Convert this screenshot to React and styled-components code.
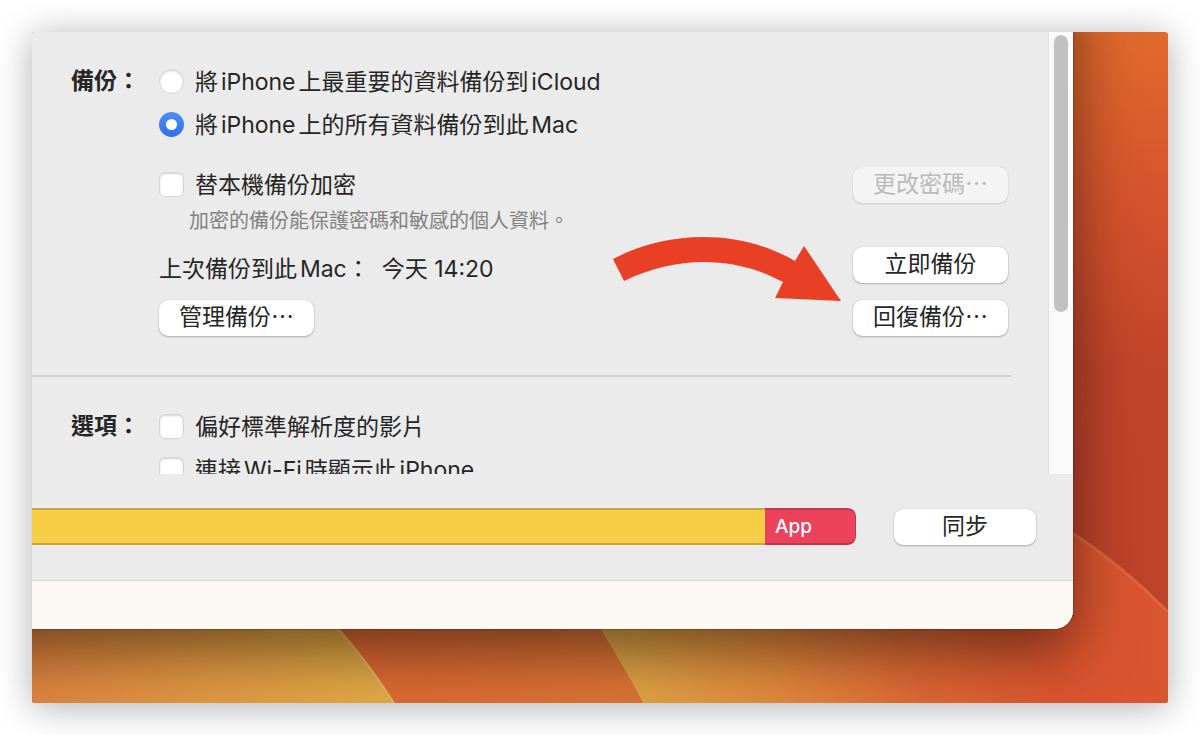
import React, { useState } from "react";
import styled, { createGlobalStyle, css } from "styled-components";

const GlobalStyle = createGlobalStyle`
  * {
    box-sizing: border-box;
  }
  body {
    margin: 0;
    background: #fff;
    color: #262626;
    font-family: Inter, "Noto Sans CJK TC", sans-serif;
    font-size: 23px;
    line-height: 28px;
    text-autospace: normal;
  }
`;

const Page = styled.div`
  display: flex;
  min-height: 100vh;
  padding: 32px;
`;
const Desktop = styled.main`
  position: relative;
  display: flex;
  flex: 1;
  min-width: 0;
  padding: 0 95px 74px 0;
  border-radius: 3px;
  overflow: hidden;
`;
const DesktopShadow = styled.div`
  display: flex;
  flex: 1;
  min-width: 0;
  border-radius: 3px;
  box-shadow: 0 4px 36px rgba(0, 0, 0, 0.32);
`;
const WallpaperSvg = styled.svg`
  position: absolute;
  inset: 0;
  width: 100%;
  height: 100%;
`;
const Window = styled.div`
  position: relative;
  display: flex;
  flex: 1;
  flex-direction: column;
  min-width: 0;
  background: #ebebeb;
  border-radius: 0 0 19px 0;
  overflow: hidden;
`;
/* the shadow runs on past the left and top edges, where the window is cut */
const WindowShadow = styled.div`
  position: relative;
  display: flex;
  flex: 1;
  min-width: 0;
  &:before {
    content: "";
    position: absolute;
    inset: -60px 0 0 -100px;
    border-radius: 0 0 19px 0;
    box-shadow: 0 0 2px rgba(0, 0, 0, 0.5), 0 22px 60px rgba(0, 0, 0, 0.5);
  }
`;

const ScrollArea = styled.div`
  display: flex;
  flex: 1 1 0;
  min-height: 0;
  overflow: hidden;
`;
const Content = styled.div`
  flex: 1;
  min-width: 0;
  padding-right: 37px;
`;
const ScrollTrack = styled.div`
  display: flex;
  justify-content: center;
  width: 25px;
  padding: 3px 0;
  background: #fafafa;
  border-left: 1px solid #e2e2e2;
`;
const ScrollThumb = styled.div`
  width: 14px;
  height: 277px;
  border-radius: 7px;
  background: #c1c1c1;
`;

const Section = styled.section`
  display: grid;
  grid-template-columns: 88px 1fr;
  padding: 28px 3px 39px 39px;
  & + & {
    border-top: 2px solid #d3d3d3;
  }
`;
const SectionTitle = styled.h2`
  margin: 0;
  font-size: 23px;
  font-weight: 600;
  line-height: 43px;
`;
const Fields = styled.div`
  min-width: 0;
`;
const Field = styled.label`
  display: flex;
  align-items: center;
  gap: 11px;
  height: ${props => (props.$compact ? "35px" : "43px")};
  white-space: nowrap;
`;
const choice = css`
  flex: none;
  display: grid;
  place-items: center;
  appearance: none;
  width: 25px;
  height: 25px;
  margin: 0;
  background: #fff;
  border: 1px solid #d6d6d6;
  box-shadow: inset 0 1px 2px rgba(0, 0, 0, 0.18);
`;
const Radio = styled.input`
  ${choice}
  border-radius: 50%;
  &:checked {
    border: 0;
    background: linear-gradient(#4c8ff9, #2f6ff0);
    box-shadow: none;
  }
  &:checked:before {
    content: "";
    width: 11px;
    height: 11px;
    border-radius: 50%;
    background: #fff;
  }
`;
const Checkbox = styled.input`
  ${choice}
  border-radius: 6px;
  &:checked {
    border-color: #2f6ff0;
    background: #2f6ff0;
  }
  &:checked:before {
    content: "✓";
    color: #fff;
    font-size: 18px;
  }
`;

const Row = styled.div`
  position: relative;
  display: flex;
  justify-content: space-between;
  align-items: ${props => props.$align || "center"};
  margin-top: ${props => props.$space || 0}px;
`;
const Note = styled.p`
  margin: 0;
  padding-left: 30px;
  color: #828282;
  font-size: 20px;
  line-height: 36px;
`;
const LastBackup = styled.p`
  display: flex;
  gap: 12px;
  margin: 0;
`;
const Button = styled.button`
  flex: none;
  width: ${props => props.$width || 155}px;
  height: 36px;
  padding: 0 0 2px;
  border: 0;
  border-radius: 9px;
  background: #fff;
  box-shadow: 0 0 1px rgba(0, 0, 0, 0.25), 0 1px 2px rgba(0, 0, 0, 0.25);
  color: #262626;
  font: inherit;
  white-space: nowrap;
  &:disabled {
    background: #f4f4f4;
    box-shadow: 0 0 1px rgba(0, 0, 0, 0.15), 0 1px 2px rgba(0, 0, 0, 0.12);
    color: #bababa;
  }
`;
const ArrowSvg = styled.svg`
  position: absolute;
  top: -11px;
  right: 166px;
  pointer-events: none;
`;

const SyncBar = styled.div`
  display: flex;
  align-items: center;
  gap: 38px;
  padding: 34px 37px 35px 0;
`;
const Capacity = styled.div`
  display: flex;
  flex: 1;
  height: 37px;
  border-radius: 0 8px 8px 0;
  overflow: hidden;
`;
const Segment = styled.div`
  flex: ${props => (props.$width ? `0 0 ${props.$width}px` : 1)};
  padding-left: 10px;
  background: ${props => props.$fill};
  border: 2px solid ${props => props.$edge};
  border-width: 2px ${props => (props.$last ? "1px" : 0)} 2px 0;
  border-radius: ${props => (props.$last ? "0 8px 8px 0" : 0)};
  color: #fff;
  font-size: 19px;
  font-weight: 500;
  line-height: 33px;
`;
const StatusBar = styled.footer`
  height: 49px;
  background: #fcf9f4;
  border-top: 1px solid #d8d7d2;
`;

const Wallpaper = () => (
  <WallpaperSvg viewBox="0 0 1136 671" preserveAspectRatio="none" aria-hidden>
    <defs>
      <linearGradient id="side" x1="0" y1="0" x2="0" y2="1">
        <stop offset="0" stopColor="#e06a2d" />
        <stop offset="0.25" stopColor="#d4542c" />
        <stop offset="0.5" stopColor="#c0442a" />
        <stop offset="1" stopColor="#bc4229" />
      </linearGradient>
      <linearGradient id="amber" x1="0" y1="0" x2="1" y2="0">
        <stop offset="0" stopColor="#de833f" />
        <stop offset="0.5" stopColor="#e09842" />
        <stop offset="1" stopColor="#e0ab44" />
      </linearGradient>
      <linearGradient id="rust" x1="0" y1="0" x2="1" y2="0">
        <stop offset="0" stopColor="#de6533" />
        <stop offset="1" stopColor="#da7335" />
      </linearGradient>
      <linearGradient id="flame" gradientUnits="userSpaceOnUse" x1="570" y1="640" x2="1136" y2="560">
        <stop offset="0" stopColor="#dea745" />
        <stop offset="0.3" stopColor="#e0873b" />
        <stop offset="0.55" stopColor="#dd6634" />
        <stop offset="0.8" stopColor="#da542f" />
        <stop offset="1" stopColor="#da562f" />
      </linearGradient>
    </defs>
    <rect width="1136" height="671" fill="url(#side)" />
    <path d="M568 497H1036L1041 501C1075 524 1108 551 1136 580V671H611Q590 632 568 597Z" fill="url(#flame)" />
    <path d="M1041 501C1075 524 1108 551 1136 580" fill="none" stroke="#e8744a" strokeWidth="3" opacity="0.6" />
    <path d="M260 560H545Q590 630 611 671H300Z" fill="url(#rust)" />
    <path d="M0 560H272Q325 610 362 671H0Z" fill="url(#amber)" />
    <path d="M306 597Q336 630 362 671" fill="none" stroke="#eeb46a" strokeWidth="2" opacity="0.8" />
  </WallpaperSvg>
);

const Arrow = () => (
  <ArrowSvg width="230" height="67" viewBox="612 236 230 67" aria-hidden>
    <path
      d="M613 259C668 230 740 229 795 261L804 246L841 301L775 298L783 282C735 256 677 255 624 281Z"
      fill="#e93f25"
    />
  </ArrowSvg>
);

const CheckField = ({ children, compact }) => (
  <Field $compact={compact}>
    <Checkbox type="checkbox" />
    {children}
  </Field>
);

const App = () => {
  const [target, setTarget] = useState("mac");

  return (
    <Page>
      <GlobalStyle />
      <DesktopShadow>
        <Desktop>
          <Wallpaper />
          <WindowShadow>
            <Window>
              <ScrollArea>
                <Content>
                  <Section>
                    <SectionTitle>備份：</SectionTitle>
                    <Fields>
                      <Field>
                        <Radio
                          type="radio"
                          name="target"
                          checked={target === "icloud"}
                          onChange={() => setTarget("icloud")}
                        />
                        將iPhone上最重要的資料備份到iCloud
                      </Field>
                      <Field>
                        <Radio
                          type="radio"
                          name="target"
                          checked={target === "mac"}
                          onChange={() => setTarget("mac")}
                        />
                        將iPhone上的所有資料備份到此Mac
                      </Field>
                      <Row $space={21} $align="flex-start">
                        <CheckField compact>替本機備份加密</CheckField>
                        <Button disabled>更改密碼⋯</Button>
                      </Row>
                      <Note>加密的備份能保護密碼和敏感的個人資料。</Note>
                      <Row $space={8} $align="flex-end">
                        <LastBackup>
                          <span>上次備份到此Mac：</span>
                          <span>今天 14:20</span>
                        </LastBackup>
                        <Button>立即備份</Button>
                        <Arrow />
                      </Row>
                      <Row $space={17}>
                        <Button>管理備份⋯</Button>
                        <Button>回復備份⋯</Button>
                      </Row>
                    </Fields>
                  </Section>
                  <Section>
                    <SectionTitle>選項：</SectionTitle>
                    <Fields>
                      <CheckField>偏好標準解析度的影片</CheckField>
                      <CheckField>連接Wi-Fi時顯示此iPhone</CheckField>
                    </Fields>
                  </Section>
                </Content>
                <ScrollTrack>
                  <ScrollThumb />
                </ScrollTrack>
              </ScrollArea>
              <SyncBar>
                <Capacity>
                  <Segment $fill="#f8cd46" $edge="#c6a544" />
                  <Segment $fill="#ed425c" $edge="#bd3a4e" $width={91} $last>
                    App
                  </Segment>
                </Capacity>
                <Button $width={142}>同步</Button>
              </SyncBar>
              <StatusBar />
            </Window>
          </WindowShadow>
        </Desktop>
      </DesktopShadow>
    </Page>
  );
};

export default App;
